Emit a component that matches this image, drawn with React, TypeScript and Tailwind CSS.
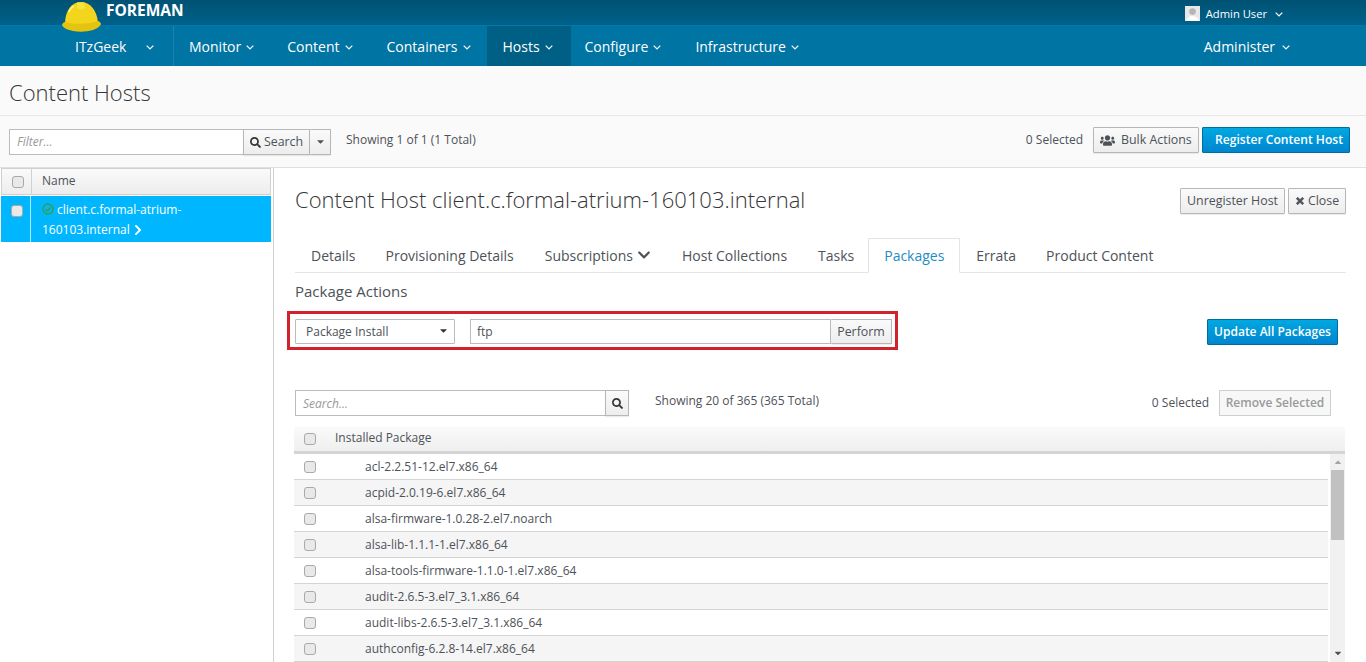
import React from "react";
import { FaSearch, FaUsers, FaTimes, FaChevronRight, FaChevronDown, FaCaretDown, FaCaretUp } from "react-icons/fa";

const NAV = [
  { label: "Monitor", cls: "ml-[15px]" },
  { label: "Content", cls: "ml-[33px]" },
  { label: "Containers", cls: "ml-[34px]" },
];
const NAV2 = [
  { label: "Configure", cls: "ml-[14px]" },
  { label: "Infrastructure", cls: "ml-[34px]" },
];
const PACKAGES = [
  "acl-2.2.51-12.el7.x86_64",
  "acpid-2.0.19-6.el7.x86_64",
  "alsa-firmware-1.0.28-2.el7.noarch",
  "alsa-lib-1.1.1-1.el7.x86_64",
  "alsa-tools-firmware-1.1.0-1.el7.x86_64",
  "audit-2.6.5-3.el7_3.1.x86_64",
  "audit-libs-2.6.5-3.el7_3.1.x86_64",
  "authconfig-6.2.8-14.el7.x86_64",
];

function Check() {
  return <span className="block w-[12px] h-[12px] rounded-[3px] border border-[#a9a9a9] bg-[#e9e9e9]" />;
}

function Angle({ className = "" }: { className?: string }) {
  return (
    <svg width="8" height="5" viewBox="0 0 8 5" className={`shrink-0 mt-[2px] ${className}`}>
      <path d="M.7.7 4 4 7.300.7" fill="none" stroke="currentColor" strokeWidth="1.2" />
    </svg>
  );
}

function Hat() {
  return (
    <svg width="40" height="34" viewBox="0 0 40 34" className="block">
      <path d="M4 24C4 10 11 2 20 2s16 8 17 21c-9 2-25 3-33 1z" fill="#f2d51c" />
      <path d="M16 2.500h7l1 6-4 1-4-1z" fill="#f7e340" />
      <path d="M1 25c0 0 1-3 3-3 8 3 25 2 33-1 1 0 3 2 3 3-1 3-5 5-8 6-7 2-14 2-20 1-5-1-10-3-11-6z" fill="#e4c40f" />
      <path d="M8 12c1-3 3-5 5-6" stroke="#fbf08a" strokeWidth="1.500" fill="none" />
    </svg>
  );
}

function Avatar() {
  return (
    <svg width="15" height="15" viewBox="0 0 15 15" className="block">
      <rect width="15" height="15" fill="#e8e8e8" />
      <circle cx="7.500" cy="5.600" r="3.300" fill="#b5b5b5" />
      <path d="M1.500 15c.5-3.500 3-5 6-5s5.500 1.500 6 5z" fill="#fff" />
    </svg>
  );
}

function OkIcon() {
  return (
    <svg width="12" height="12" viewBox="0 0 12 12" className="inline-block align-[-1px] mr-[3px]">
      <circle cx="6" cy="6" r="5" fill="none" stroke="#3f9c35" strokeWidth="1.300" />
      <path d="M3.500 6.100l1.800 1.800 3.200-3.400" fill="none" stroke="#3f9c35" strokeWidth="1.300" />
    </svg>
  );
}

const btn = "border border-[#b7b7b7] rounded-[1px] bg-gradient-to-b from-[#fafafa] to-[#ededed] text-[#4d5258] text-[12.400px] shadow-[0_1px_1px_rgba(0,0,0,0.08)]";
const primary = "flex items-center justify-center rounded-[1px] border border-[#006e9c] bg-gradient-to-b from-[#00a8e1] to-[#0085cf] text-white font-semibold";

export default function App() {
  return (
    <div className="w-[1366px] h-[662px] overflow-hidden bg-white text-[#363636] text-[12px] flex flex-col font-['Open_Sans',sans-serif]">
      {/* top bar */}
      <div className="relative h-[26px] shrink-0 bg-gradient-to-b from-[#005273] to-[#00618a] border-b border-[#0078a8] flex items-center">
        <div className="absolute left-[61px] top-0"><Hat /></div>
        <span className="ml-[106px] mb-[3px] text-white text-[15.500px] font-bold">FOREMAN</span>
        <div className="ml-auto flex items-center mr-[83px] mt-[3px] text-white text-[11.200px]">
          <Avatar />
          <span className="ml-[6px]">Admin User</span>
          <Angle className="ml-[8px]" />
        </div>
      </div>
      {/* nav */}
      <div className="h-[40px] shrink-0 bg-[#0074a2] flex items-stretch text-white text-[14px]">
        <div className="w-[174px] shrink-0 border-r border-[#1a82ad] flex items-center pl-[75px]">
          <span>ITzGeek</span>
          <Angle className="ml-[20px]" />
        </div>
        {NAV.map((n) => (
          <div key={n.label} className={`flex items-center ${n.cls}`}>
            <span>{n.label}</span>
            <Angle className="ml-[5px]" />
          </div>
        ))}
        <div className="ml-[16px] w-[84px] bg-[#005f85] flex items-center pl-[16px]">
          <span>Hosts</span>
          <Angle className="ml-[5px]" />
        </div>
        {NAV2.map((n) => (
          <div key={n.label} className={`flex items-center ${n.cls}`}>
            <span>{n.label}</span>
            <Angle className="ml-[5px]" />
          </div>
        ))}
        <div className="ml-auto mr-[76px] flex items-center">
          <span>Administer</span>
          <Angle className="ml-[7px]" />
        </div>
      </div>
      {/* title */}
      <div className="h-[50px] shrink-0 bg-[#fafafa] border-b border-[#e7e7e7] flex items-center pl-[9px]">
        <h1 className="text-[22px] font-light text-[#363636] leading-none mt-[3px]">Content Hosts</h1>
      </div>
      {/* toolbar */}
      <div className="h-[52px] shrink-0 bg-[#fafafa] border-b border-[#e0e0e0] flex items-center pl-[9px] pr-[16px]">
        <div className="w-[234px] h-[26px] bg-white border border-[#bbb] border-r-0 flex items-center pl-[7px] pt-[1px] italic text-[#999] rounded-l-[1px]">Filter...</div>
        <div className={`${btn} h-[26px] w-[67px] flex items-center justify-center rounded-none pt-[1px]`}>
          <FaSearch className="text-[11px] mr-[3px] text-[#363636]" />Search
        </div>
        <div className={`${btn} h-[26px] w-[21px] border-l-0 flex items-center justify-center`}>
          <FaCaretDown className="text-[11px] text-[#4d5258]" />
        </div>
        <span className="ml-[15px] mb-[3px] text-[#4d5258]">Showing 1 of 1 (1 Total)</span>
        <span className="ml-auto text-[#4d5258] mb-[3px]">0 Selected</span>
        <div className={`${btn} ml-[10px] mb-[4px] h-[26px] w-[106px] flex items-center pl-[6px] pt-[1px]`}>
          <FaUsers className="text-[15px] mr-[6px]" />Bulk Actions
        </div>
        <div className={`${primary} ml-[3px] mb-[4px] h-[26px] w-[148px] text-[12.100px] pl-[6px] pt-[1px]`}>
          Register Content Host
        </div>
      </div>
      {/* body */}
      <div className="flex-1 min-h-0 flex">
        {/* left pane */}
        <div className="w-[274px] shrink-0 border-r border-[#d1d1d1] pl-[1px] pr-[1px]">
          <div className="w-[270px] h-[27px] border border-[#d1d1d1] bg-gradient-to-b from-[#fafafa] to-[#ededed] flex items-center font-medium text-[#4d5258]">
            <div className="w-[30px] h-full border-r border-[#d1d1d1] flex items-center justify-center pl-[2px]"><Check /></div>
            <span className="ml-[10px] mb-[1px]">Name</span>
          </div>
          <div className="w-[270px] h-[46px] bg-[#00b7ff] flex text-white leading-[20px] mt-[1px]">
            <div className="w-[30px] shrink-0 border-r border-white/70 flex justify-center pt-[9px] pl-[2px]"><Check /></div>
            <div className="pl-[11px] pt-[4px] w-[180px]">
              <OkIcon />client.c.formal-atrium-160103.internal
              <FaChevronRight className="inline-block text-[12px] ml-[2px] align-[-2px]" />
            </div>
          </div>
        </div>
        {/* right pane */}
        <div className="flex-1 min-w-0 pl-[21px] pr-[20px]">
          <div className="flex items-start h-[60px]">
            <h2 className="text-[22px] font-light text-[#363636] mt-[16px] leading-[30px] whitespace-nowrap">Content Host client.c.formal-atrium-160103.internal</h2>
            <div className={`${btn} ml-auto mt-[20px] h-[26px] w-[105px] flex items-center justify-center`}>Unregister Host</div>
            <div className={`${btn} ml-[3px] mt-[20px] h-[26px] w-[58px] flex items-center justify-center`}>
              <FaTimes className="text-[10px] mr-[3px]" stroke="currentColor" strokeWidth={50} />Close
            </div>
          </div>
          {/* tabs */}
          <div className="h-[45px] border-b border-[#e4e4e4] flex items-end text-[14px] text-[#4d5258]">
            <div className="h-[34px] pl-[16px] pr-[15px] flex items-center">Details</div>
            <div className="h-[34px] pl-[15px] pr-[17px] flex items-center mr-[-1px]">Provisioning Details</div>
            <div className="h-[34px] pl-[15px] pr-[16px] flex items-center">Subscriptions<FaChevronDown className="ml-[4px] text-[14px]" /></div>
            <div className="h-[34px] px-[15px] flex items-center">Host Collections</div>
            <div className="h-[34px] pl-[16px] pr-[14px] flex items-center">Tasks</div>
            <div className="h-[35px] w-[92px] flex items-center justify-center border border-[#e4e4e4] border-b-white bg-white text-[#1f8dbf] mb-[-1px]">Packages</div>
            <div className="h-[34px] pl-[16px] pr-[15px] flex items-center">Errata</div>
            <div className="h-[34px] pl-[15px] flex items-center">Product Content</div>
          </div>
          <div className="h-[38px] flex items-center pb-[1px] text-[15px] text-[#4d5258]">Package Actions</div>
          {/* actions */}
          <div className="flex items-start h-[74px]">
            <div className="relative left-[-8px] w-[611px] h-[39px] border-[3px] border-[#d2232c] pl-[5px] pt-[5px] flex items-start shrink-0">
              <div className="relative w-[160px] h-[25px] border border-[#bbb] rounded-[1px] bg-white flex items-center pl-[10px] pt-[1px] text-[#4d5258]">
                Package Install
                <FaCaretDown className="absolute right-[5px] top-[5px] text-[11px] text-[#333]" />
              </div>
              <div className="ml-[15px] w-[361px] h-[25px] border border-[#bbb] bg-white flex items-center pl-[6px] pt-[1px] text-[#4d5258]">ftp</div>
              <div className={`${btn} w-[61px] h-[25px] border-l-0 flex items-center justify-center pt-[1px]`}>Perform</div>
            </div>
            <div className={`${primary} ml-auto mt-[8px] h-[26px] w-[131px] mr-[8px]`}>
              Update All Packages
            </div>
          </div>
          {/* search row */}
          <div className="flex items-center h-[36px] pr-[15px]">
            <div className="w-[310px] h-[26px] bg-white border border-[#bbb] border-r-0 flex items-center pl-[7px] pt-[1px] italic text-[#999]">Search...</div>
            <div className={`${btn} w-[24px] h-[26px] flex items-center justify-center rounded-none`}><FaSearch className="text-[11px] text-[#363636]" /></div>
            <span className="ml-[26px] mb-[5px] text-[#4d5258]">Showing 20 of 365 (365 Total)</span>
            <span className="ml-auto text-[#4d5258]">0 Selected</span>
            <div className="ml-[10px] w-[112px] h-[26px] border border-[#cfcfcf] bg-[#f7f7f7] flex items-center justify-center text-[#9a9a9a] font-semibold">Remove Selected</div>
          </div>
          {/* table */}
          <div className="mt-[6px] ml-[-1px] h-[27px] bg-gradient-to-b from-[#fafafa] to-[#efefef] border-b-[3px] border-[#d4d4d4] flex items-center font-medium text-[#4d5258] w-[1051px]">
            <div className="w-[31px] pl-[10px]"><Check /></div>
            <span className="ml-[10px] mb-[3px]">Installed Package</span>
          </div>
          <div className="flex ml-[-1px] w-[1051px]">
            <div className="w-[1034px] shrink-0">
              {PACKAGES.map((p, i) => (
                <div key={p} className={`h-[26px] border-b border-[#d4d4d4] flex items-center text-[#4d5258] ${i % 2 ? "bg-[#f5f5f5]" : "bg-white"}`}>
                  <div className="w-[71px] pl-[10px] shrink-0"><Check /></div>
                  <span>{p}</span>
                </div>
              ))}
            </div>
            <div className="ml-[2px] w-[15px] h-[208px] bg-[#f1f1f1] flex flex-col items-center">
              <FaCaretUp className="text-[10px] text-[#a3a3a3] mt-[3px] mb-[3px]" />
              <div className="w-[13px] h-[70px] bg-[#c1c1c1]" />
              <div className="flex-1" />
              <FaCaretDown className="text-[10px] text-[#505050] mb-[4px]" />
            </div>
          </div>
        </div>
      </div>
    </div>
  );
}
